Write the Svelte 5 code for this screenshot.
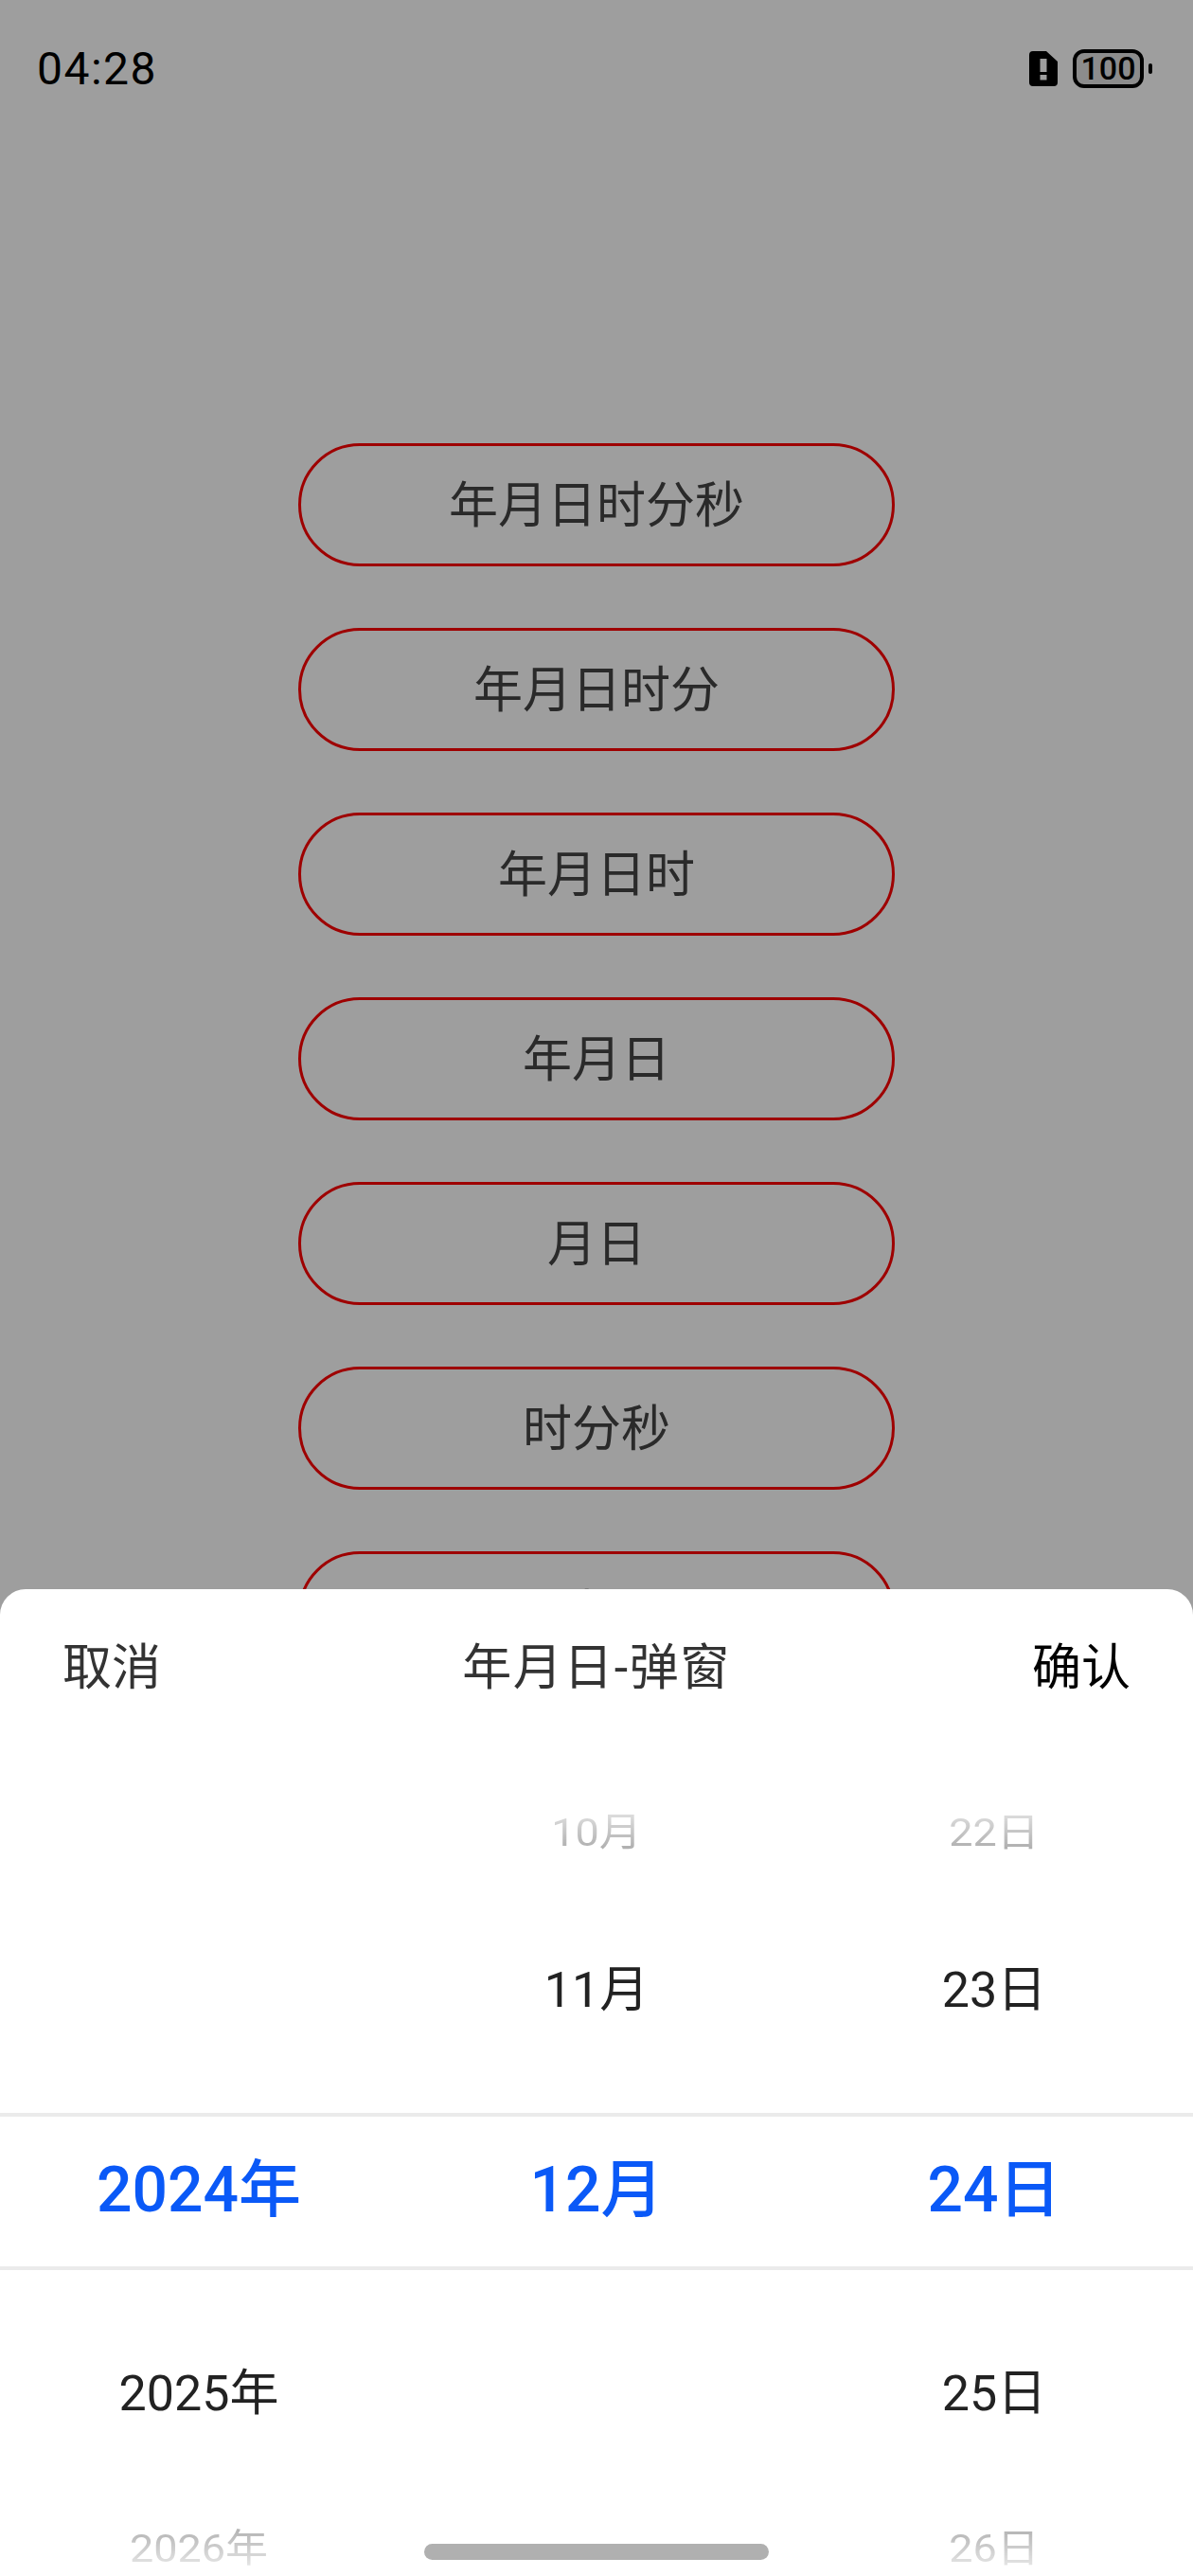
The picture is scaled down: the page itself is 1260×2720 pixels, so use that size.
<script>
  const buttons = ['年月日时分秒', '年月日时分', '年月日时', '年月日', '月日', '时分秒', '时分'];
  const rows = [
    { kind: 'far-top', cells: ['', '10月', '22日'] },
    { kind: 'near-top', cells: ['', '11月', '23日'] },
    { kind: 'selected', cells: ['2024年', '12月', '24日'] },
    { kind: 'near-bottom', cells: ['2025年', '', '25日'] },
    { kind: 'far-bottom', cells: ['2026年', '', '26日'] }
  ];
</script>

<div class="screen">
  <main class="page">
    {#each buttons as label}
      <button class="pill">{label}</button>
    {/each}
  </main>

  <div class="scrim"></div>

  <header class="status">
    <span class="time">04:28</span>
    <div class="status-icons">
      <svg class="sim" viewBox="0 0 30 37" width="30" height="37" aria-hidden="true">
        <path fill="#000" fill-rule="evenodd" d="M4 0H18L30 11V33a4 4 0 0 1-4 4H4a4 4 0 0 1-4-4V4a4 4 0 0 1 4-4ZM11.5 8V22H18.5V8ZM11.5 25V30.5H18.5V25Z"/>
      </svg>
      <div class="battery">
        <div class="battery-body">100</div>
        <div class="battery-cap"></div>
      </div>
    </div>
  </header>

  <section class="sheet">
    <div class="sheet-head">
      <span class="cancel">取消</span>
      <span class="title">年月日-弹窗</span>
      <span class="confirm">确认</span>
    </div>
    <div class="wheel">
      {#each rows as row}
        <div class="row {row.kind}">
          {#each row.cells as cell}
            <div class="cell"><span>{cell}</span></div>
          {/each}
        </div>
      {/each}
    </div>
  </section>

  <div class="home-bar"></div>
</div>

<style>
  :global(body) {
    margin: 0;
    background: #fff;
  }

  .screen {
    position: relative;
    width: 1260px;
    height: 2720px;
    overflow: hidden;
    background: #fff;
    font-family: Roboto, "Noto Sans CJK SC", sans-serif;
  }

  .page {
    display: flex;
    flex-direction: column;
    align-items: center;
    gap: 65px;
    padding-top: 468px;
  }

  .pill {
    width: 630px;
    height: 130px;
    flex: none;
    box-sizing: border-box;
    border: 3px solid #ff0000;
    border-radius: 65px;
    background: transparent;
    color: #444;
    font: inherit;
    font-size: 52px;
    padding: 0 0 7px;
  }

  .scrim {
    position: absolute;
    inset: 0;
    background: rgba(0, 0, 0, 0.38);
  }

  .status {
    position: absolute;
    top: 0;
    left: 0;
    right: 0;
    height: 144px;
    box-sizing: border-box;
    padding: 0 43px 0 39px;
    display: flex;
    justify-content: space-between;
    align-items: center;
    color: #000;
  }

  .time {
    font-size: 48px;
    font-weight: 450;
    letter-spacing: 1.5px;
  }

  .status-icons {
    display: flex;
    align-items: center;
    gap: 16px;
  }

  .battery {
    display: flex;
    align-items: center;
    gap: 5px;
  }

  .battery-body {
    width: 75px;
    height: 41px;
    box-sizing: border-box;
    border: 4px solid #000;
    border-radius: 12px;
    background: #8c8c8c;
    color: #000;
    font-size: 34px;
    font-weight: 500;
    line-height: 33px;
    text-align: center;
  }

  .battery-cap {
    width: 4px;
    height: 11px;
    border-radius: 2px;
    background: #000;
  }

  .sheet {
    position: absolute;
    top: 1678px;
    left: 0;
    right: 0;
    bottom: 0;
    background: #fff;
    border-radius: 27px 27px 0 0;
  }

  .sheet-head {
    height: 156px;
    margin-bottom: 6px;
    box-sizing: border-box;
    padding: 0 66px;
    display: flex;
    justify-content: space-between;
    align-items: center;
    font-size: 52px;
  }

  .cancel,
  .title {
    color: #333;
  }

  .title {
    letter-spacing: 1.5px;
  }

  .confirm {
    color: #000;
  }

  .wheel {
    display: flex;
    flex-direction: column;
    padding-top: 49px;
  }

  .row {
    display: grid;
    grid-template-columns: repeat(3, 1fr);
    align-items: center;
    text-align: center;
  }

  .cell span {
    display: inline-block;
  }

  .far-top,
  .far-bottom {
    color: #333;
    font-size: 45px;
  }

  .far-top {
    height: 84px;
  }

  .far-bottom {
    height: 80px;
  }

  .far-top .cell span {
    transform: scaleY(0.92);
    -webkit-mask-image: linear-gradient(to bottom, rgba(0, 0, 0, 0.08), rgba(0, 0, 0, 0.45));
    mask-image: linear-gradient(to bottom, rgba(0, 0, 0, 0.08), rgba(0, 0, 0, 0.45));
  }

  .far-bottom .cell span {
    transform: scaleY(0.92);
    -webkit-mask-image: linear-gradient(to top, rgba(0, 0, 0, 0.08), rgba(0, 0, 0, 0.45));
    mask-image: linear-gradient(to top, rgba(0, 0, 0, 0.08), rgba(0, 0, 0, 0.45));
  }

  .near-top,
  .near-bottom {
    color: #222;
    font-size: 52px;
  }

  .near-top {
    height: 246px;
    margin-bottom: 12px;
  }

  .near-bottom {
    height: 250px;
  }

  .selected {
    height: 166px;
    box-sizing: border-box;
    padding-bottom: 17px;
    border-top: 4px solid #ebebeb;
    border-bottom: 4px solid #ebebeb;
    color: #0a59f7;
    font-size: 66px;
    font-weight: 500;
  }

  .home-bar {
    position: absolute;
    left: 448px;
    top: 2686px;
    width: 364px;
    height: 17px;
    border-radius: 9px;
    background: #b0b0b0;
  }
</style>
